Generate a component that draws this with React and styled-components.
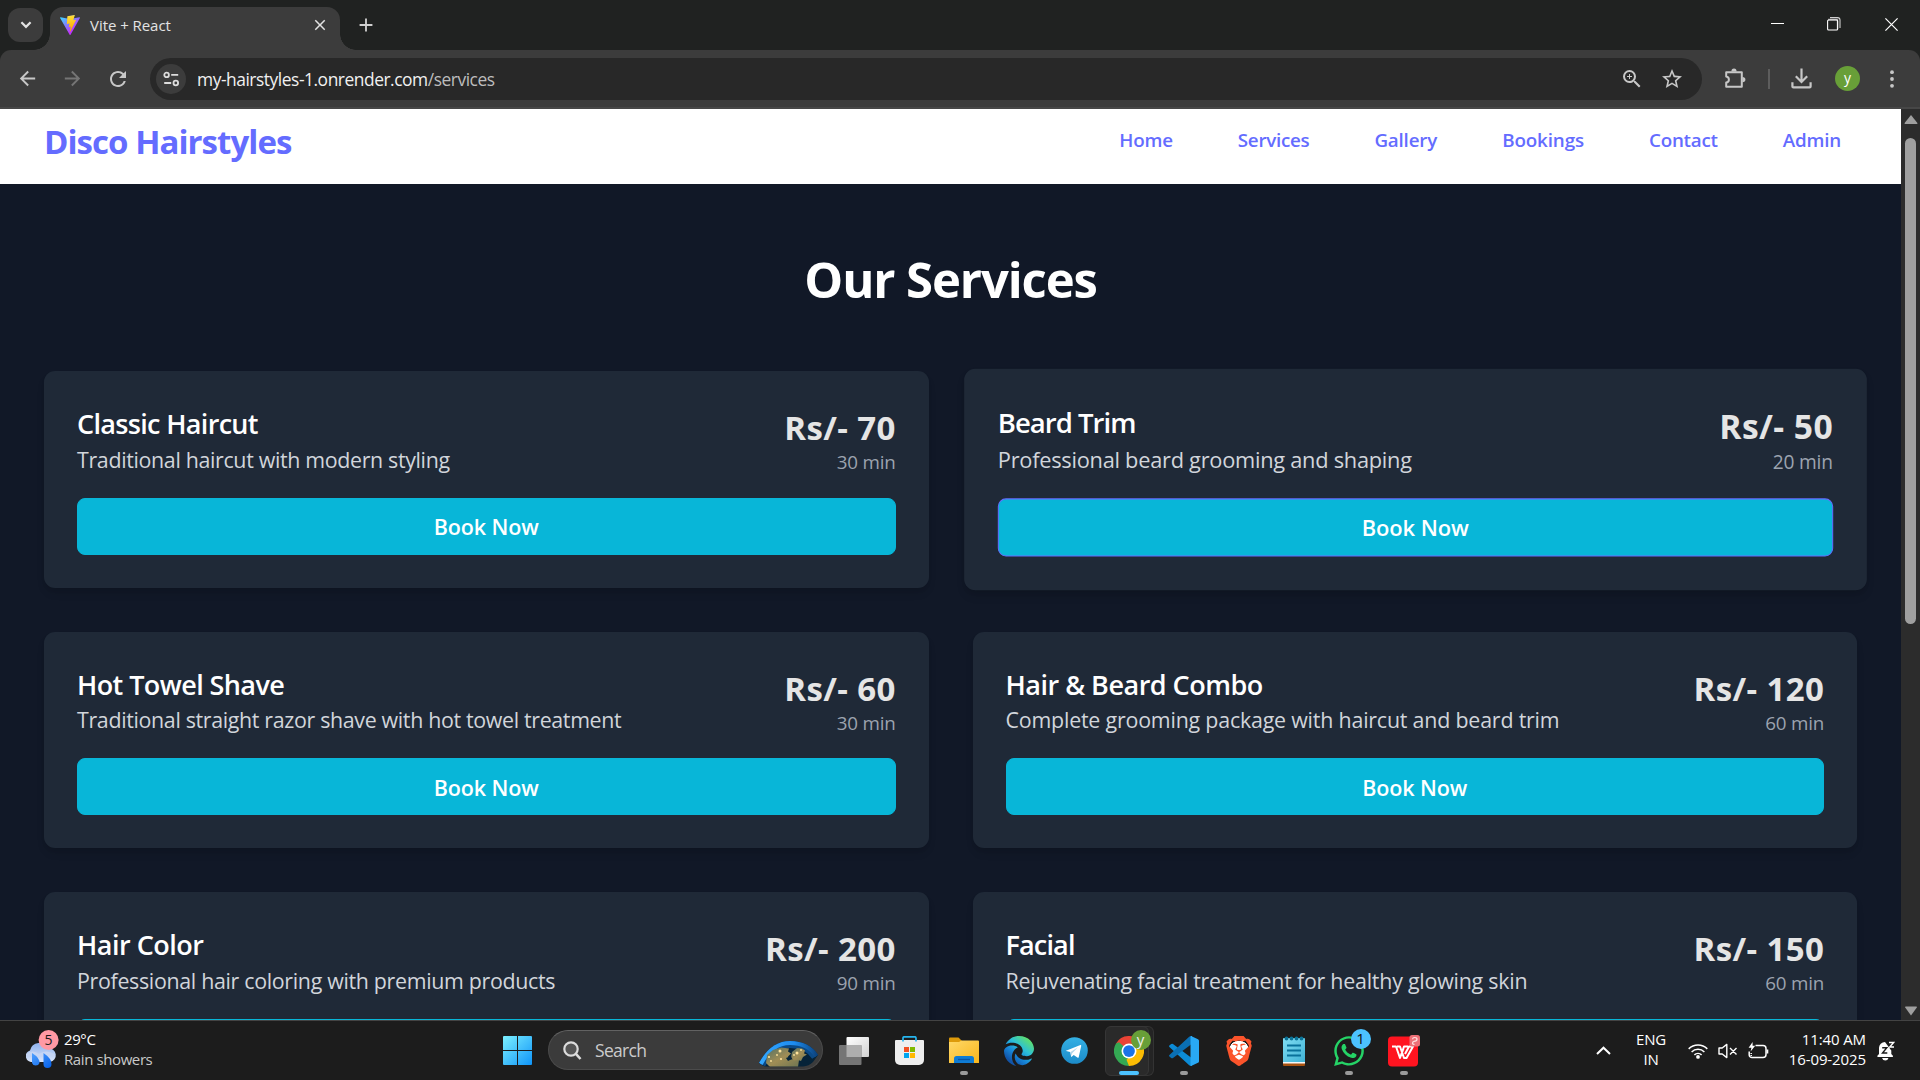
import React from "react";
import styled, { createGlobalStyle, css } from "styled-components";
import { MdArrowBack, MdArrowForward, MdRefresh, MdStarBorder, MdZoomIn, MdClose, MdAdd } from "react-icons/md";
import { FaWhatsapp, FaEdge } from "react-icons/fa6";
import { SiBrave } from "react-icons/si";

const GlobalStyle = createGlobalStyle`
  * { box-sizing: border-box; }
  body {
    margin: 0;
    background: #111827;
    font-family: "Open Sans", "Noto Sans", sans-serif;
    overflow: hidden;
  }
  svg { display: block; flex: none; }
`;

const Screen = styled.div`
  width: 1920px;
  height: 1080px;
  display: flex;
  flex-direction: column;
  overflow: hidden;
`;

const tracking = css`
  letter-spacing: ${(p) => p.$track || 0}px;
  white-space: nowrap;
`;

/* ---------- Browser chrome ---------- */

const TabStrip = styled.div`
  height: 50px;
  flex: none;
  display: flex;
  padding-left: 8px;
  background: #202221;
`;

const TabSearch = styled.div`
  width: 35px;
  height: 34px;
  margin: 8px 7px 0 0;
  border-radius: 12px;
  background: #3c3c3c;
  display: grid;
  place-items: center;
`;

const Tab = styled.div`
  position: relative;
  width: 290px;
  height: 43px;
  margin-top: 7px;
  padding: 0 11px 7px 10px;
  border-radius: 13px 13px 0 0;
  background: #3c3c3c;
  display: flex;
  align-items: center;
  gap: 10px;
  color: #e3e3e3;

  &::before,
  &::after {
    content: "";
    position: absolute;
    bottom: 0;
    width: 16px;
    height: 16px;
  }
  &::before {
    left: -16px;
    background: radial-gradient(circle at 0 0, transparent 15.5px, #3c3c3c 16px);
  }
  &::after {
    right: -16px;
    background: radial-gradient(circle at 100% 0, transparent 15.5px, #3c3c3c 16px);
  }
`;

const TabTitle = styled.span`
  flex: 1;
  font-size: 15px;
  ${tracking}
`;

const NewTab = styled.div`
  width: 52px;
  height: 50px;
  display: grid;
  place-items: center;
  color: #d0d0d0;
`;

const WindowControls = styled.div`
  margin-left: auto;
  display: flex;
  align-items: center;
  height: 48px;
`;

const WindowButton = styled.div`
  width: 57px;
  display: grid;
  place-items: center;
`;

const ToolbarBack = styled.div`
  flex: none;
  height: 59px;
  background: #202221;
`;

const Toolbar = styled.div`
  height: 59px;
  border-radius: 11px 11px 0 0;
  border-bottom: 2px solid #474747;
  background: #3c3c3c;
  display: flex;
  align-items: center;
`;

const ToolButton = styled.div`
  width: ${(p) => p.$w}px;
  flex: none;
  display: grid;
  place-items: center;
  color: ${(p) => (p.$dim ? "#757575" : "#c7c7c7")};
`;

const AddressBar = styled.div`
  flex: none;
  width: 1552px;
  height: 42px;
  margin-left: 5px;
  padding: 0 10px 0 6px;
  border-radius: 21px;
  background: #282828;
  display: flex;
  align-items: center;
`;

const SiteInfo = styled.div`
  width: 30px;
  height: 30px;
  border-radius: 50%;
  background: #3c3c3c;
  display: grid;
  place-items: center;
`;

const Url = styled.div`
  flex: 1;
  padding: 1px 0 0 11px;
  font-size: 17.4px;
  color: #f1f1f1;
  ${tracking}
  span { color: #bdbdbd; }
`;

const Divider = styled.div`
  flex: none;
  width: 2px;
  height: 20px;
  background: #5d5d5d;
`;

const Avatar = styled.div`
  width: 25px;
  height: 25px;
  border-radius: 50%;
  background: #689f38;
  color: #fff;
  font-size: 14px;
  line-height: 23px;
  text-align: center;
`;

/* ---------- Web page ---------- */

const Viewport = styled.div`
  height: 911px;
  flex: none;
  display: flex;
  overflow: hidden;
  background: #111827;
`;

const Page = styled.div`
  width: 1901px;
  height: 911px;
  overflow: hidden;
`;

const SiteHeader = styled.header`
  height: 75px;
  padding: 7px 60px 17px 44px;
  background: #fff;
  display: flex;
  justify-content: space-between;
  color: #646cff;
`;

const Brand = styled.div`
  font-size: 33px;
  font-weight: 700;
  line-height: 51px;
  ${tracking}
`;

const Nav = styled.nav`
  display: flex;
  gap: 65px;
`;

const NavLink = styled.a`
  font-size: 18.8px;
  font-weight: 600;
  line-height: 48px;
  ${tracking}
`;

const Heading = styled.h1`
  margin: 68px 0 65px;
  text-align: center;
  color: #fff;
  font-size: 49px;
  font-weight: 700;
  line-height: 54px;
  ${tracking}
`;

const CardGrid = styled.div`
  padding: 0 44px;
  display: grid;
  grid-template-columns: 1fr 1fr;
  gap: 44px;
`;

const Card = styled.article`
  height: 216.6px;
  padding: 33px;
  border-radius: 11px;
  background: #1f2937;
  box-shadow: 0 6px 9px -1px rgba(0, 0, 0, 0.1), 0 3px 6px -3px rgba(0, 0, 0, 0.1);
  transform: ${(p) => (p.$hovered ? "scale(1.02)" : "none")};
`;

const CardTop = styled.div`
  height: 71.5px;
  margin-bottom: 22px;
  display: flex;
  justify-content: space-between;
`;

const CardTitle = styled.h3`
  margin: 0;
  font-size: 27px;
  font-weight: 600;
  line-height: 39.5px;
  color: #fff;
  ${tracking}
`;

const CardText = styled.p`
  margin: 0;
  font-size: 21.4px;
  line-height: 31px;
  color: #d1d5db;
  ${tracking}
`;

const PriceBlock = styled.div`
  text-align: right;
`;

const Price = styled.div`
  margin-right: -0.4px;
  font-size: 33px;
  font-weight: 700;
  line-height: 48px;
  color: #e5e5e5;
  ${tracking}
`;

const Duration = styled.div`
  font-size: 18.8px;
  line-height: 21px;
  color: #9ca3af;
  ${tracking}
`;

const BookButton = styled.button`
  display: block;
  width: 100%;
  height: 57px;
  padding: 1px 0 0;
  border: 1px solid ${(p) => (p.$hovered ? "#646cff" : "#08b6d8")};
  border-radius: 8px;
  background: #08b6d8;
  color: #fff;
  font-family: inherit;
  font-size: 21.5px;
  font-weight: 600;
  letter-spacing: -0.12px;
`;

const ScrollTrack = styled.div`
  width: 19px;
  height: 911px;
  padding: 5px 4px 4px;
  background: #2c2c2c;
  display: flex;
  flex-direction: column;
  align-items: center;
`;

const ScrollThumb = styled.div`
  width: 11px;
  height: 486px;
  margin: 13px 0 auto;
  border-radius: 6px;
  background: #9f9f9f;
`;

/* ---------- Taskbar ---------- */

const Taskbar = styled.footer`
  height: 60px;
  flex: none;
  border-top: 1px solid #434343;
  background: #1c1c1c;
  display: flex;
  color: #fff;
`;

const Weather = styled.div`
  width: 489.5px;
  padding: 0 0 4px 24px;
  display: flex;
  align-items: center;
  gap: 5px;
`;

const WeatherText = styled.div`
  font-size: 15px;
  line-height: 20px;
  ${tracking}
  div:last-child { color: #c9c9c9; }
`;

const Slot = styled.div`
  position: relative;
  width: 55px;
  height: 59px;
  display: grid;
  place-items: center;
`;

const Running = styled.i`
  position: absolute;
  bottom: 5px;
  left: calc(50% - ${(p) => (p.$active ? 10 : 4)}px);
  width: ${(p) => (p.$active ? 20 : 8)}px;
  height: 4px;
  border-radius: 2px;
  background: ${(p) => (p.$active ? "#4cc2ff" : "#9a9a9a")};
`;

const ActivePlate = styled.div`
  position: relative;
  width: 44px;
  height: 50px;
  margin-right: 5px;
  padding-left: 5px;
  border: 1px solid #363636;
  border-radius: 6px;
  background: #2a2a2a;
  box-shadow: 5px 0 0 -1px #242424, 5px 0 0 0 #333;
  display: grid;
  place-items: center;
`;

const Badge = styled.span`
  position: absolute;
  top: ${(p) => p.$y}px;
  left: ${(p) => p.$x}px;
  width: 20px;
  height: 20px;
  border-radius: 50%;
  background: ${(p) => p.$bg};
  color: ${(p) => p.$fg};
  font-size: 15px;
  line-height: 19px;
  text-align: center;
`;

const SearchBox = styled.div`
  width: 275px;
  height: 40px;
  margin: 9px 3.5px 0;
  padding: 0 4px 0 14px;
  border: 1px solid #4b4b4b;
  border-top-color: #626262;
  border-radius: 20px;
  background: #3b3b3b;
  display: flex;
  align-items: center;
  gap: 13px;
`;

const SearchLabel = styled.span`
  flex: 1;
  font-size: 17.5px;
  color: #cbcbcb;
  ${tracking}
`;

const Globe = styled.svg`
  align-self: flex-end;
  margin-bottom: 2px;
`;

const Tray = styled.div`
  margin-left: auto;
  display: flex;
  align-items: center;
  padding-right: 15px;
`;

const TrayCell = styled.div`
  width: ${(p) => p.$w}px;
  display: flex;
  justify-content: center;
  gap: 10px;
  align-items: center;
`;

const TrayText = styled.div`
  width: ${(p) => p.$w}px;
  margin-bottom: 3px;
  text-align: ${(p) => p.$align};
  font-size: 15px;
  line-height: 20px;
  ${tracking}
`;

/* ---------- Icons ---------- */

const ViteLogo = () => (
  <svg width="20" height="20" viewBox="0 0 256 257">
    <defs>
      <linearGradient id="viteA" x1="-.8%" x2="57.6%" y1="7.7%" y2="78.4%">
        <stop offset="0%" stopColor="#41D1FF" />
        <stop offset="100%" stopColor="#BD34FE" />
      </linearGradient>
      <linearGradient id="viteB" x1="43.4%" x2="50.3%" y1="2.2%" y2="89%">
        <stop offset="0%" stopColor="#FFEA83" />
        <stop offset="8.3%" stopColor="#FFDD35" />
        <stop offset="100%" stopColor="#FFA800" />
      </linearGradient>
    </defs>
    <path fill="url(#viteA)" d="M255.153 37.938L134.897 252.976c-2.483 4.44-8.862 4.466-11.382.048L.875 37.958c-2.746-4.814 1.371-10.646 6.827-9.67l120.385 21.517a6.537 6.537 0 0 0 2.322-.004l117.867-21.483c5.438-.991 9.574 4.796 6.877 9.62Z" />
    <path fill="url(#viteB)" d="M185.432.063L96.44 17.501a3.268 3.268 0 0 0-2.634 3.014l-5.474 92.456a3.268 3.268 0 0 0 3.997 3.378l24.777-5.718c2.318-.535 4.413 1.507 3.936 3.838l-7.361 36.047c-.495 2.426 1.782 4.5 4.151 3.78l15.304-4.649c2.372-.72 4.652 1.36 4.15 3.788l-11.698 56.621c-.732 3.542 3.979 5.473 5.943 2.437l1.313-2.028l72.516-144.72c1.215-2.423-.88-5.186-3.54-4.672l-25.505 4.922c-2.396.462-4.435-1.77-3.759-4.114l16.646-57.705c.677-2.35-1.37-4.583-3.769-4.113Z" />
  </svg>
);

const ChevronDown = () => (
  <svg width="12" height="8" viewBox="0 0 12 8" fill="none" stroke="#e3e3e3" strokeWidth="2.2"><path d="M1.4 1.3 6 5.9l4.6-4.6" /></svg>
);
const Minimize = () => (
  <svg width="13" height="13" viewBox="0 0 13 13"><path d="M0 5.5h13" stroke="#fff" /></svg>
);
const Restore = () => (
  <svg width="15" height="14" viewBox="0 0 15 14" fill="none" stroke="#fff" strokeWidth="1.1">
    <path d="M3 .6h7.6Q13 .6 13 3v8" stroke="#cfcfcf" /><path d="M1 2.5h9.5V12" stroke="#999" strokeWidth="1.4" />
    <rect x=".6" y="3" width="10" height="10" rx="1" />
  </svg>
);
const CloseWindow = () => (
  <svg width="13" height="13" viewBox="0 0 13 13"><path d="M.4.4l12.2 12.2M12.6.4.4 12.6" stroke="#fff" strokeWidth="1.2" /></svg>
);
const TuneIcon = () => (
  <svg width="17" height="16" viewBox="0 0 17 16" fill="none" stroke="#dcdcdc" strokeWidth="1.8">
    <circle cx="3.6" cy="3.9" r="2.3" /><path d="M8.2 3.9h7M1.2 12h7" /><circle cx="12.8" cy="12" r="2.3" />
  </svg>
);
const Puzzle = () => (
  <svg width="21" height="21" viewBox="0 0 21 21">
    <path d="M1.2 4.2h15.6v14.6H1.2v-4.2c3.6-.4 3.6-5.8 0-6.2Z" fill="none" stroke="#c7c7c7" strokeWidth="2" strokeLinejoin="round" />
    <path d="M6.4 3.5a2.6 3 0 0 1 5.2 0ZM17.4 9a3 2.6 0 0 1 0 5.2Z" fill="#c7c7c7" />
  </svg>
);
const Download = () => (
  <svg width="21" height="21" viewBox="0 0 21 21" fill="none" stroke="#c7c7c7" strokeWidth="2.2">
    <path d="M10.5.5v13M4.8 8.3l5.7 5.7 5.7-5.7M1.4 14.2v4.2q0 1 1 1h16.2q1 0 1-1v-4.2" />
  </svg>
);
const Dots = () => (
  <svg width="4" height="18" viewBox="0 0 4 18" fill="#c7c7c7"><circle cx="2" cy="2.2" r="1.9" /><circle cx="2" cy="9" r="1.9" /><circle cx="2" cy="15.8" r="1.9" /></svg>
);
const ArrowUp = () => (
  <svg width="16" height="11" viewBox="0 0 16 11"><path d="M8 1 14.400 9q.4 1-.6 1H2.200q-1 0-.6-1Z" fill="#9f9f9f" /></svg>
);
const ArrowDown = () => (
  <svg width="14" height="10" viewBox="0 0 14 10"><path d="M7 9.4 1.200 1.600Q.8.7 1.800.5h10.400q1 .2.6 1.100Z" fill="#9f9f9f" /></svg>
);

const RainIcon = () => (
  <svg width="35" height="38" viewBox="0 0 35 38">
    <defs>
      <linearGradient id="cloud" x1="0" y1="0" x2="0" y2="1"><stop offset="0" stopColor="#8fb2ee" /><stop offset="1" stopColor="#dbe6fa" /></linearGradient>
      <linearGradient id="drop" x1="0" y1="0" x2="1" y2="1"><stop offset="0" stopColor="#4fa0ff" /><stop offset="1" stopColor="#0560e8" /></linearGradient>
    </defs>
    <path d="M7 32a6 6 0 0 1-1-11.600A9.600 9.600 0 0 1 24 18.500a6.800 6.800 0 0 1 2 13.500Z" fill="url(#cloud)" />
    <path d="M2 24q7-5 13 0 7-5 15 0v3q-10-3-15 1-6-3-13 0Z" fill="#c5d5f4" />
    <path d="M8 23q8 5 7.500 10a4 4 0 0 1-7.500 0ZM19.500 23q8.500 6 8 11a4 4 0 0 1-8 0Z" fill="url(#drop)" />
    <circle cx="24.600" cy="10" r="10" fill="#ff99a4" />
    <text x="24.600" y="15" fontSize="14" textAnchor="middle" fill="#1b1b1b" fontFamily="Open Sans">5</text>
  </svg>
);

const WindowsLogo = () => (
  <svg width="29" height="29" viewBox="0 0 29 29">
    <defs><linearGradient id="win" gradientUnits="userSpaceOnUse" x1="0" y1="0" x2="29" y2="29"><stop offset="0" stopColor="#7cf0ff" /><stop offset="1" stopColor="#0f94f8" /></linearGradient></defs>
    <path fill="url(#win)" d="M1 0h13v14H0V1q0-1 1-1ZM15 0h13q1 0 1 1v13H15ZM0 15h14v14H1q-1 0-1-1ZM15 15h14v13q0 1-1 1H15Z" />
  </svg>
);
const SearchIcon = () => (
  <svg width="19" height="19" viewBox="0 0 19 19" fill="none" stroke="#dcdcdc" strokeWidth="2.2"><circle cx="8" cy="8" r="6.700" fill="#555" /><path d="M12.700 12.700 17.500 18" strokeWidth="2.600" /></svg>
);
const GlobeArt = () => (
  <Globe width="59" height="26" viewBox="0 0 59 26">
    <defs>
      <linearGradient id="land" x1="0" y1="0" x2="1" y2="1"><stop offset="0" stopColor="#4d6f66" /><stop offset=".5" stopColor="#a08d55" /><stop offset="1" stopColor="#6f7552" /></linearGradient>
      <linearGradient id="rim" x1="0" y1="0" x2="1" y2="0"><stop offset="0" stopColor="#35a8ff" /><stop offset=".6" stopColor="#1d8cf0" /><stop offset="1" stopColor="#0b3f78" /></linearGradient>
      <clipPath id="globeClip"><path d="M0 22Q12 0 31 0 50 0 59 14L54 21Q50 25 44 25.500H8Q3 25 0 22Z" /></clipPath>
    </defs>
    <g clipPath="url(#globeClip)">
      <path d="M0 0h59v26H0Z" fill="#062338" />
      <path d="M0 22Q12 0 31 0 50 0 59 14" fill="none" stroke="#0b4a86" strokeWidth="14" />
      <path d="M0 22Q12 0 31 0 50 0 59 14" fill="none" stroke="url(#rim)" strokeWidth="8" />
      <path d="M7 22 8 14l6-5 8-2.500 8 1-1 3 3 2-3 3 1 3 6-.5 4 1-1 7H11Z" fill="url(#land)" />
      <path d="M33 11l5-4 5 .500 3 2-1 3 3 1-4 2.500-2 4-3-1-4 .500-3-3Z" fill="url(#land)" />
      <path d="M27 17l5-2 1 3-4 2Z" fill="#062338" />
      <g fill="#ffe39a"><circle cx="10" cy="16" r="1.100" /><circle cx="21" cy="10" r="1.500" /><circle cx="18" cy="14" r=".9" /><circle cx="38" cy="12" r="1.500" /><circle cx="42" cy="9" r=".9" /><circle cx="22" cy="18" r="1.100" /><circle cx="12" cy="20" r=".9" /><circle cx="35" cy="14" r=".9" /></g>
    </g>
  </Globe>
);
const TaskView = () => (
  <svg width="30" height="28" viewBox="0 0 30 28">
    <defs><linearGradient id="tv" x1="0" y1="0" x2="1" y2="1"><stop offset="0" stopColor="#fff" /><stop offset="1" stopColor="#d2d2d2" /></linearGradient></defs>
    <rect x="7.500" width="22.500" height="20" rx="1" fill="url(#tv)" /><rect y="8" width="22.500" height="20" rx="1" fill="#757575" /><path d="M7.500 8h15v12h-15Z" fill="#aeaeae" />
  </svg>
);
const Store = () => (
  <svg width="29" height="29" viewBox="0 0 29 29">
    <path d="M1 4h27q1 0 1 1v19a5 5 0 0 1-5 5H5a5 5 0 0 1-5-5V5q0-1 1-1Z" fill="#eee" />
    <path d="M8 5.500V2q0-1.200 1.200-1.200h10.600Q21 .8 21 2v3.500" fill="none" stroke="#26b5ee" strokeWidth="1.700" />
    <path d="M9 11h5v5H9Z" fill="#f25022" /><path d="M15 11h5v5h-5Z" fill="#7fba00" /><path d="M9 17h5v5H9Z" fill="#00a4ef" /><path d="M15 17h5v5h-5Z" fill="#ffb900" />
  </svg>
);
const Explorer = () => (
  <svg width="30" height="27" viewBox="0 0 30 27">
    <defs><linearGradient id="fold" x1="0" y1="0" x2="1" y2="1"><stop offset="0" stopColor="#ffd868" /><stop offset="1" stopColor="#f9b61c" /></linearGradient></defs>
    <path d="M0 1.500Q0 .5 1 .5h8.500L13 4v4H0Z" fill="#dd9a0a" /><path d="M0 5h10l2.500-1.500H29q1 0 1 1V26H0Z" fill="url(#fold)" />
    <path d="M5 26v-4.500Q5 19 7.500 19h15q2.500 0 2.500 2.500V26Z" fill="#0f7cd4" /><path d="M9 22.500h12" stroke="#0a55a5" strokeWidth="1.300" />
  </svg>
);
const EdgeBox = styled.div`
  display: flex;
`;
const EdgeIcon = () => (
  <EdgeBox>
    <svg width="0" height="0"><defs><linearGradient id="edge" x1=".9" y1=".15" x2=".3" y2=".9"><stop offset="0" stopColor="#5fe06b" /><stop offset=".4" stopColor="#2cbfd8" /><stop offset=".7" stopColor="#1786d9" /><stop offset="1" stopColor="#1254a8" /></linearGradient></defs></svg>
    <FaEdge size={30} fill="url(#edge)" />
  </EdgeBox>
);
const Telegram = () => (
  <svg width="27" height="27" viewBox="0 0 27 27">
    <defs><linearGradient id="tg" x1="0" y1="0" x2="0" y2="1"><stop offset="0" stopColor="#34b0e4" /><stop offset="1" stopColor="#1c8bc9" /></linearGradient></defs>
    <circle cx="13.500" cy="13.500" r="13.300" fill="url(#tg)" />
    <path d="M5 13.700 19.400 8q1-.3.8.9l-2.500 11.300q-.3 1-1.300.4l-3.700-2.700-2 1.900q-.4.3-.6-.4l-.9-4.300-4-1.100q-.7-.1-.2-.3Z" fill="#fff" /><path d="m9.500 15 7.500-4.700-5.800 5.900-.6 2.900Z" fill="#b5d7ea" />
  </svg>
);
const Chrome = () => (
  <svg width="30" height="30" viewBox="0 0 48 48">
    <path d="M24 24 3.200 12a24 24 0 0 1 41.600 0Z" fill="#ea4335" /><path d="M24 24 44.800 12A24 24 0 0 1 24 48Z" fill="#fbbc04" /><path d="M24 24v24A24 24 0 0 1 3.200 12Z" fill="#34a853" />
    <path d="M24 12h20.800l-2 6H24Z" fill="#ea4335" /><path d="M3.200 12 13.600 30 20 30 24 24 8 10Z" fill="#34a853" /><path d="M34.400 30 24 48l-4-10 10-10Z" fill="#fbbc04" />
    <circle cx="24" cy="24" r="12" fill="#fff" /><circle cx="24" cy="24" r="9.400" fill="#1a73e8" />
  </svg>
);
const VsCode = () => (
  <svg width="30" height="30" viewBox="0 0 30 30">
    <path d="M.4 9.600 2.200 8q.9-.6 1.800 0L22 21.500V30q-1 0-1.800-.8L.4 11Q-.3 10.300.4 9.600Z" fill="#0c8bd6" />
    <path d="M.4 20.400 2.200 22q.9.6 1.800 0L22 8.500V0q-1 0-1.800.8L.4 19Q-.3 19.700.4 20.400Z" fill="#0a6fb4" />
    <path d="M22 0l7 3.200q1 .5 1 1.500v20.600q0 1-1 1.500L22 30Q23 29.500 23 28V2q0-1.500-1-2ZM21.500.5 23 0v30l-1.500-.5Z" fill="#29a9f5" />
  </svg>
);
const BraveBox = styled.div`
  display: grid;
  color: #fb542b;
  background: radial-gradient(circle at 50% 48%, #fff 9.5px, transparent 10px);
`;
const Notepad = () => (
  <svg width="22" height="30" viewBox="0 0 22 30">
    <defs><linearGradient id="np" x1="0" y1="0" x2="1" y2="1"><stop offset="0" stopColor="#81ddf2" /><stop offset="1" stopColor="#3fb2d5" /></linearGradient></defs>
    <path d="M0 27h22v2q0 1-1 1H1q-1 0-1-1Z" fill="#a85210" /><path d="M0 25h22v2.500H0Z" fill="#f6f6f6" /><path d="M0 3q0-1 1-1h20q1 0 1 1v23H0Z" fill="url(#np)" />
    <path d="M4 9.500h14M4 14.500h14M4 19.500h14" stroke="#09719a" strokeWidth="1.800" />
    <g fill="#0b7296"><circle cx="3.500" cy="2.500" r="1.900" /><circle cx="8.500" cy="2.500" r="1.900" /><circle cx="13.500" cy="2.500" r="1.900" /><circle cx="18.500" cy="2.500" r="1.900" /></g>
  </svg>
);
const Wps = () => (
  <svg width="32" height="32" viewBox="0 0 32 32">
    <rect y="1.500" width="30" height="30" rx="4" fill="#ff1420" />
    <path d="M4 11.500h4l4 11.500 3.500-9.500M9 11.500h3L16 23h2.500l6.500-11.500h-4L17 19M12 23l4-11.500h4" fill="none" stroke="#fff" strokeWidth="2" strokeLinejoin="round" />
    <rect x="21.500" y="0" width="10.500" height="11.500" rx="2.500" fill="#ec7077" /><path d="M24.500 4.300q.2-1.800 2.300-1.800 2.300 0 2.200 1.900T26 6.300q-1.700.4-1.500 2.200.4 1 2 .8" fill="none" stroke="#ffe1e1" strokeWidth="1.200" />
  </svg>
);
const ChevronUp = () => (
  <svg width="15" height="9" viewBox="0 0 15 9" fill="none" stroke="#fff" strokeWidth="2"><path d="m1 8 6.500-6.300L14 8" /></svg>
);
const Wifi = () => (
  <svg width="20" height="16" viewBox="0 0 20 16" fill="none" stroke="#fff" strokeWidth="1.500">
    <path d="M.7 5.900a13.200 13.200 0 0 1 18.600 0M3.600 9a9.100 9.100 0 0 1 12.800 0M6.400 11.900a5.200 5.200 0 0 1 7.200 0" /><circle cx="10" cy="13.900" r="1.900" fill="#fff" stroke="none" />
  </svg>
);
const Muted = () => (
  <svg width="20" height="16" viewBox="0 0 20 16" fill="none" stroke="#fff" strokeWidth="1.400"><path d="M1 5h3.200L8.800 1.400v13.200L4.200 11H1ZM12 5l6.500 6.500M18.500 5 12 11.500" strokeLinejoin="round" /></svg>
);
const Battery = () => (
  <svg width="21" height="17" viewBox="0 0 21 17" fill="none" stroke="#fff" strokeWidth="1.500">
    <path d="M7.500 3.500H15q3 0 3 3v6q0 3-3 3H4q-2.500 0-2.800-2.500V9.500" /><path d="M18.500 7.500h1.800v4h-1.800Z" fill="#fff" stroke="none" /><path d="M4.600 0 .6 5.800h2.800L2.600 9.500l4.600-5.700H4.600Z" fill="#fff" stroke="none" /><path d="M3.200 11v3" strokeDasharray="1 1" />
  </svg>
);
const Bell = () => (
  <svg width="18" height="20" viewBox="0 0 18 20">
    <path d="M8 1a6 6 0 0 0-6 6v6L.4 14.800Q0 16 1 16h14.500q1-.2.4-1.200L14.300 13V9.500L8 1ZM5 17h6.500q-.8 2.500-3.200 2.500T5 17Z" fill="#fff" />
    <path d="M10.500-.5H18v9h-4Z" fill="#1c1c1c" /><path d="M12 1.500h4.700L12.700 6H17" fill="none" stroke="#fff" strokeWidth="1.400" /><path d="M5.200 6.800h4.600l-4.300 5.200h4.800" fill="none" stroke="#1c1c1c" strokeWidth="1.400" />
  </svg>
);

/* ---------- Data ---------- */

const links = [
  { label: "Home", track: -0.2 },
  { label: "Services", track: -0.28 },
  { label: "Gallery", track: -0.18 },
  { label: "Bookings", track: -0.12 },
  { label: "Contact", track: -0.22 },
  { label: "Admin", track: -0.2 },
];

const BOOK = "Book Now";

const services = [
  { name: "Classic Haircut", nt: -0.67, text: "Traditional haircut with modern styling", tt: -0.34, price: "Rs/- 70", time: "30 min", action: BOOK },
  { name: "Beard Trim", nt: -0.98, text: "Professional beard grooming and shaping", tt: -0.27, price: "Rs/- 50", time: "20 min", action: BOOK, hovered: true },
  { name: "Hot Towel Shave", nt: -0.58, text: "Traditional straight razor shave with hot towel treatment", tt: -0.34, price: "Rs/- 60", time: "30 min", action: BOOK },
  { name: "Hair & Beard Combo", nt: -0.5, text: "Complete grooming package with haircut and beard trim", tt: -0.2, price: "Rs/- 120", time: "60 min", action: BOOK },
  { name: "Hair Color", nt: -0.5, text: "Professional hair coloring with premium products", tt: -0.32, price: "Rs/- 200", time: "90 min" },
  { name: "Facial", nt: -0.85, text: "Rejuvenating facial treatment for healthy glowing skin", tt: -0.23, price: "Rs/- 150", time: "60 min" },
];

const ServiceCard = ({ s }) => (
  <Card $hovered={s.hovered}>
    <CardTop>
      <div>
        <CardTitle $track={s.nt}>{s.name}</CardTitle>
        <CardText $track={s.tt}>{s.text}</CardText>
      </div>
      <PriceBlock>
        <Price $track={0.4}>{s.price}</Price>
        <Duration $track={-0.2}>{s.time}</Duration>
      </PriceBlock>
    </CardTop>
    <BookButton $hovered={s.hovered}>{s.action}</BookButton>
  </Card>
);

export default function App() {
  return (
    <Screen>
      <GlobalStyle />
      <TabStrip>
        <TabSearch><ChevronDown /></TabSearch>
        <Tab>
          <ViteLogo />
          <TabTitle $track={-0.05}>Vite + React</TabTitle>
          <MdClose size={18} />
        </Tab>
        <NewTab><MdAdd size={22} /></NewTab>
        <WindowControls>
          <WindowButton><Minimize /></WindowButton>
          <WindowButton><Restore /></WindowButton>
          <WindowButton><CloseWindow /></WindowButton>
        </WindowControls>
      </TabStrip>
      <ToolbarBack>
        <Toolbar>
          <ToolButton $w={55}><MdArrowBack size={23} /></ToolButton>
          <ToolButton $w={35} $dim><MdArrowForward size={23} /></ToolButton>
          <ToolButton $w={55}><MdRefresh size={24} /></ToolButton>
          <AddressBar>
            <SiteInfo><TuneIcon /></SiteInfo>
            <Url $track={-0.46}>my-hairstyles-1.onrender.com<span>/services</span></Url>
            <ToolButton $w={40}><MdZoomIn size={24} /></ToolButton>
            <ToolButton $w={40}><MdStarBorder size={24} /></ToolButton>
          </AddressBar>
          <ToolButton $w={66}><Puzzle /></ToolButton>
          <Divider />
          <ToolButton $w={62}><Download /></ToolButton>
          <ToolButton $w={31}><Avatar>y</Avatar></ToolButton>
          <ToolButton $w={57}><Dots /></ToolButton>
        </Toolbar>
      </ToolbarBack>

      <Viewport>
        <Page>
          <SiteHeader>
            <Brand $track={-0.95}>Disco Hairstyles</Brand>
            <Nav>
              {links.map((l) => <NavLink key={l.label} $track={l.track}>{l.label}</NavLink>)}
            </Nav>
          </SiteHeader>
          <Heading $track={-1.1}>Our Services</Heading>
          <CardGrid>
            {services.map((s) => <ServiceCard key={s.name} s={s} />)}
          </CardGrid>
        </Page>
        <ScrollTrack>
          <ArrowUp />
          <ScrollThumb />
          <ArrowDown />
        </ScrollTrack>
      </Viewport>

      <Taskbar>
        <Weather>
          <RainIcon />
          <WeatherText $track={-0.4}>
            <div>29°C</div>
            <div>Rain showers</div>
          </WeatherText>
        </Weather>
        <Slot><WindowsLogo /></Slot>
        <SearchBox>
          <SearchIcon />
          <SearchLabel $track={-0.7}>Search</SearchLabel>
          <GlobeArt />
        </SearchBox>
        <Slot><TaskView /></Slot>
        <Slot><Store /></Slot>
        <Slot><Explorer /><Running /></Slot>
        <Slot><EdgeIcon /></Slot>
        <Slot><Telegram /></Slot>
        <Slot>
          <ActivePlate>
            <Chrome />
            <Badge $x={25} $y={3} $bg="#689f38" $fg="#eee">y</Badge>
          </ActivePlate>
          <Running $active />
        </Slot>
        <Slot><VsCode /><Running /></Slot>
        <Slot><BraveBox><SiBrave size={30} /></BraveBox></Slot>
        <Slot><Notepad /></Slot>
        <Slot>
          <FaWhatsapp size={34} color="#25d366" />
          <Badge $x={29} $y={8} $bg="#4cc2ff" $fg="#111">1</Badge>
          <Running />
        </Slot>
        <Slot><Wps /><Running /></Slot>
        <Tray>
          <TrayCell $w={36}><ChevronUp /></TrayCell>
          <TrayText $w={60} $align="center" $track={-0.2}>ENG<br />IN</TrayText>
          <TrayCell $w={94}><Wifi /><Muted /><Battery /></TrayCell>
          <TrayText $w={91} $align="right" $track={-0.1}>11:40 AM<br />16-09-2025</TrayText>
          <TrayCell $w={39}><Bell /></TrayCell>
        </Tray>
      </Taskbar>
    </Screen>
  );
}
